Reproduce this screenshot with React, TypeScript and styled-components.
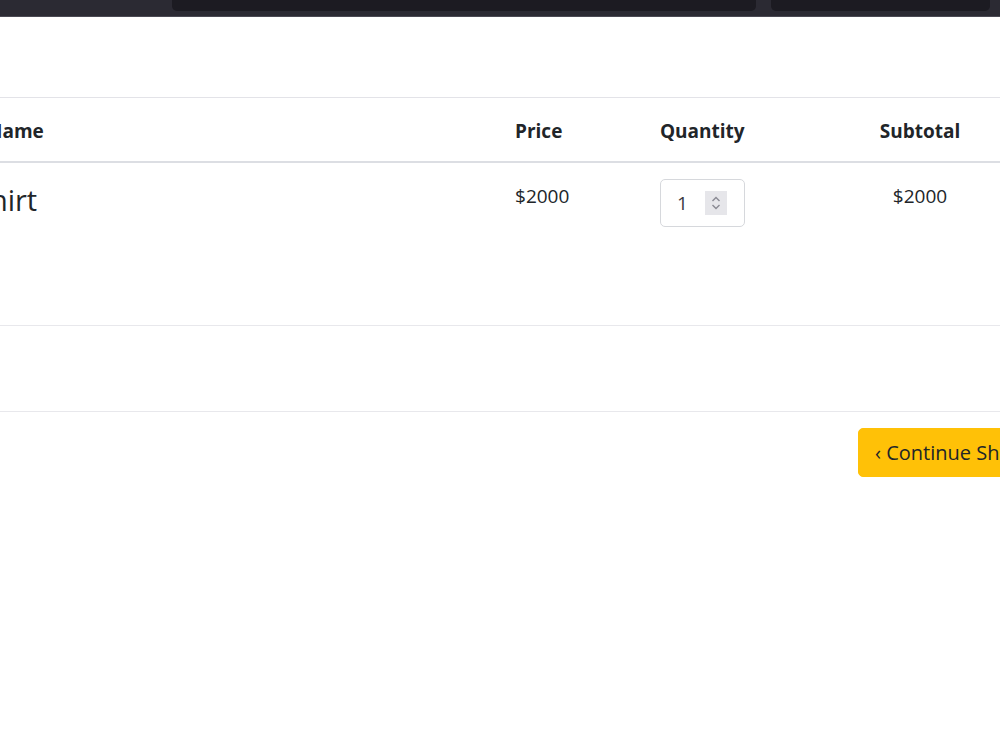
import React, { FC } from "react";
import styled, { createGlobalStyle } from "styled-components";

//******** DATA ********//

interface ICartItem {
  name: string;
  price: number;
  quantity: number;
}

const items: ICartItem[] = [{ name: "Shirt", price: 2000, quantity: 1 }];

//******** COMPONENTS ********//

const GlobalStyle = createGlobalStyle`
  html, body {
    margin: 0;
    padding: 0;
    background: #ffffff;
    overflow: hidden;
  }
  body {
    font-family: "Open Sans", "Noto Sans", sans-serif;
    color: #212529;
  }
`;

const Chevrons: FC = () => (
  <svg width="12" height="18" viewBox="0 0 12 18" fill="none">
    <path d="M2.5 7 L6 3.5 L9.5 7" stroke="#8a8a93" strokeWidth="1.4" />
    <path d="M2.5 11 L6 14.5 L9.5 11" stroke="#8a8a93" strokeWidth="1.4" />
  </svg>
);

const QuantityInput: FC<{ value: number }> = ({ value }) => (
  <SQuantity>
    <SQuantityValue>{value}</SQuantityValue>
    <SSpinner>
      <Chevrons />
    </SSpinner>
  </SQuantity>
);

const App: FC = () => {
  return (
    <>
      <GlobalStyle />
      <SBrowserBar>
        <SUrlBox />
        <SSideBox />
      </SBrowserBar>
      <SViewport>
        <SContainer>
          <STable>
            <colgroup>
              <col style={{ width: 530 }} />
              <col style={{ width: 145 }} />
              <col style={{ width: 192 }} />
              <col style={{ width: 158 }} />
              <col style={{ width: 120 }} />
            </colgroup>
            <thead>
              <tr>
                <SHeadCell>Name</SHeadCell>
                <SHeadCell>Price</SHeadCell>
                <SHeadCell>Quantity</SHeadCell>
                <SHeadCell $center>Subtotal</SHeadCell>
                <SHeadCell />
              </tr>
            </thead>
            <tbody>
              {items.map((item) => (
                <SItemRow key={item.name}>
                  <SCell>
                    <SProductName>{item.name}</SProductName>
                  </SCell>
                  <SCell>${item.price}</SCell>
                  <SCell>
                    <QuantityInput value={item.quantity} />
                  </SCell>
                  <SCell $center>${item.price * item.quantity}</SCell>
                  <SCell />
                </SItemRow>
              ))}
              <STotalRow>
                <SCell colSpan={5} />
              </STotalRow>
            </tbody>
            <tfoot>
              <tr>
                <SFootCell colSpan={3} />
                <SFootCell colSpan={2}>
                  <SButton type="button">‹ Continue Shopping</SButton>
                </SFootCell>
              </tr>
            </tfoot>
          </STable>
        </SContainer>
      </SViewport>
    </>
  );
};

export default App;

//******** STYLES ********//

const SBrowserBar = styled.div`
  height: 16px;
  background: #2b2a33;
  border-bottom: 1px solid #4a4953;
  display: flex;
  align-items: flex-start;
  padding-left: 172px;
  gap: 15px;
`;

const SUrlBox = styled.div`
  width: 584px;
  height: 11px;
  background: #1c1b22;
  border-radius: 0 0 5px 5px;
`;

const SSideBox = styled.div`
  width: 219px;
  height: 11px;
  background: #1c1b22;
  border-radius: 0 0 5px 5px;
`;

const SViewport = styled.div`
  width: 1000px;
  overflow: hidden;
  padding-top: 80px;
`;

const SContainer = styled.div`
  width: 1145px;
  margin-left: -27px;
`;

const STable = styled.table`
  width: 100%;
  table-layout: fixed;
  border-collapse: collapse;
  border-top: 1px solid #e3e3e8;
  font-size: 19px;
`;

const SHeadCell = styled.th<{ $center?: boolean }>`
  height: 61px;
  padding: 2px 10px 0 12px;
  font-weight: 700;
  font-size: 19px;
  text-align: ${({ $center }) => ($center ? "center" : "left")};
  vertical-align: middle;
  border-bottom: 2px solid #dcdee3;
  &:first-child {
    padding-left: 14px;
  }
`;

const SCell = styled.td<{ $center?: boolean }>`
  padding: 18px 10px 16px 12px;
  vertical-align: top;
  text-align: ${({ $center }) => ($center ? "center" : "left")};
  line-height: 30px;
`;

const SItemRow = styled.tr`
  height: 163px;
  border-bottom: 1px solid #e8e8ec;
`;

const STotalRow = styled.tr`
  height: 86px;
  border-bottom: 1px solid #e8e8ec;
`;

const SFootCell = styled.td`
  padding: 16px 10px 0 12px;
  vertical-align: top;
`;

const SProductName = styled.span`
  font-size: 29px;
  line-height: 36px;
  display: inline-block;
  margin-top: 1px;
  margin-left: -11px;
`;

const SQuantity = styled.div`
  display: inline-flex;
  align-items: center;
  width: 85px;
  height: 48px;
  box-sizing: border-box;
  margin-top: -2px;
  border: 1px solid #d6d8dc;
  border-radius: 5px;
  padding: 0 17px 0 16px;
  justify-content: space-between;
`;

const SQuantityValue = styled.span`
  font-size: 19px;
  color: #3a3a40;
`;

const SSpinner = styled.span`
  display: flex;
  align-items: center;
  justify-content: center;
  width: 22px;
  height: 24px;
  background: #e6e6ea;
`;

const SButton = styled.button`
  margin-left: 6px;
  height: 49px;
  padding: 0 16px;
  background: #ffc107;
  border: 1px solid #ffc107;
  border-radius: 5px;
  color: #212529;
  font-family: "Open Sans", "Noto Sans", sans-serif;
  font-size: 20px;
  white-space: nowrap;
  cursor: pointer;
`;
